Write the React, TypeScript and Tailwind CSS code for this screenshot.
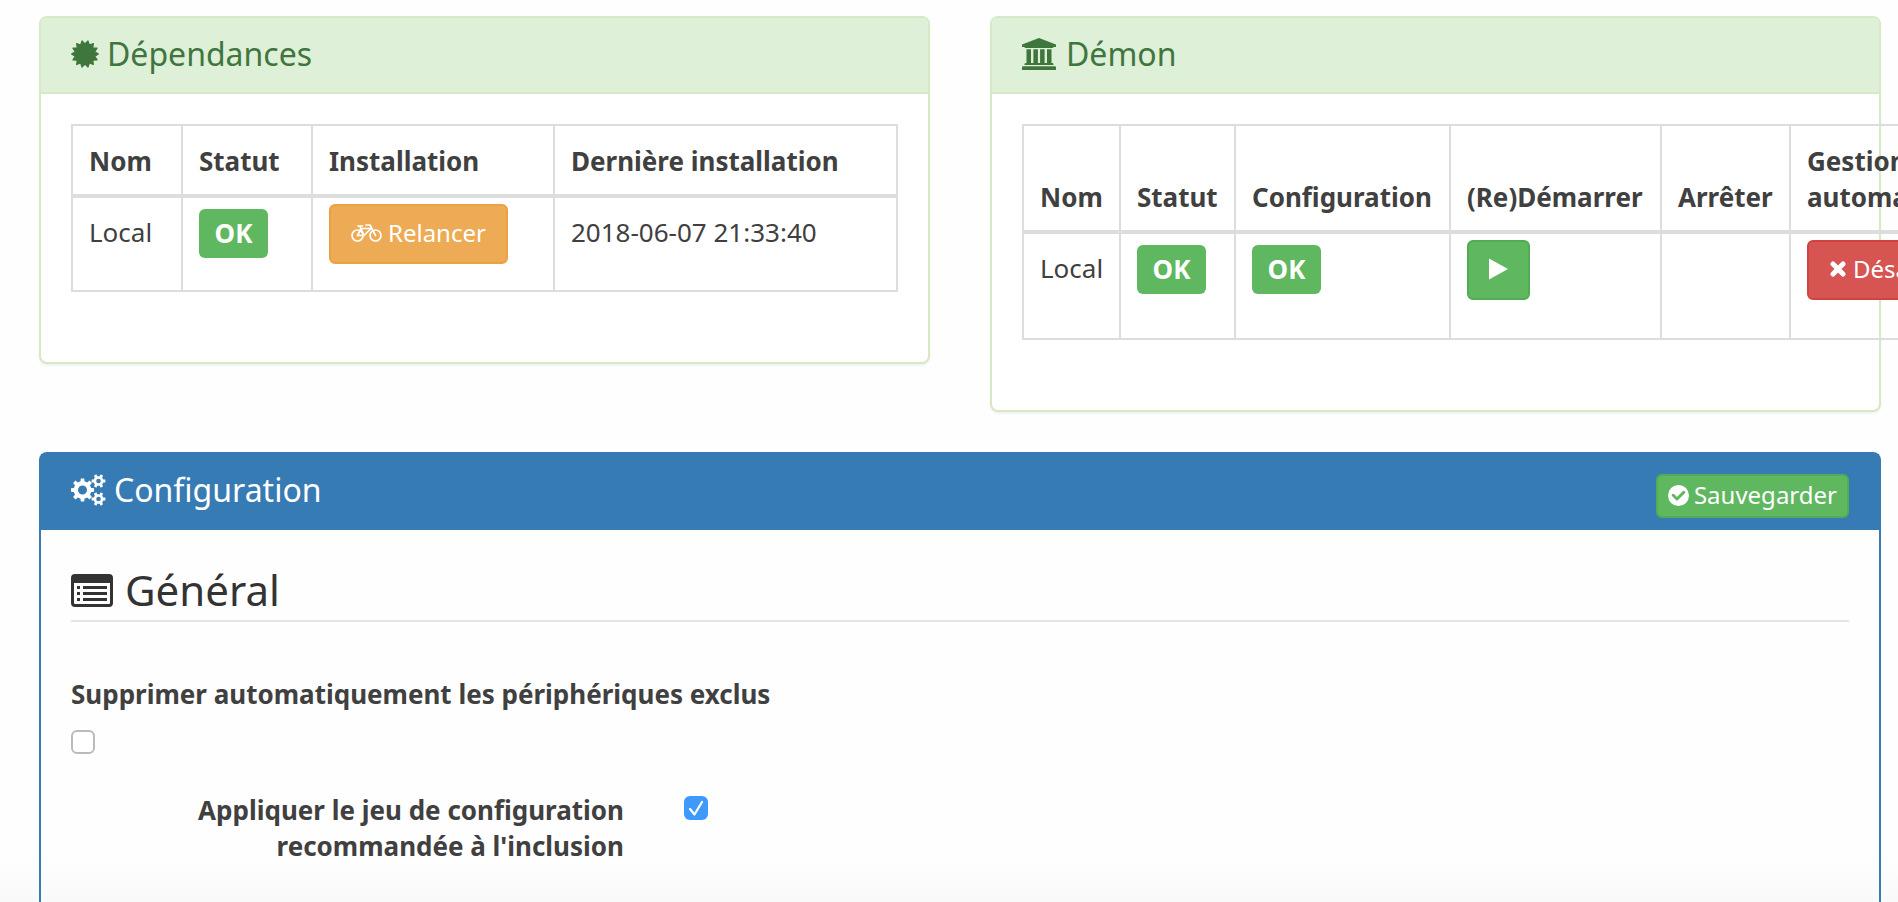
import type { ReactNode } from 'react';

/* Closed outline of a toothed wheel centred on (cx, cy). */
function gear(cx: number, cy: number, inner: number, outer: number, teeth: number, phase: number) {
  const step = (Math.PI * 2) / teeth;
  const points: string[] = [];
  for (let i = 0; i < teeth; i++) {
    const a = i * step + phase;
    const corners: [number, number][] = [
      [inner, -0.28],
      [outer, -0.19],
      [outer, 0.19],
      [inner, 0.28],
    ];
    for (const [r, f] of corners) {
      points.push(`${(cx + r * Math.cos(a + f * step)).toFixed(2)} ${(cy + r * Math.sin(a + f * step)).toFixed(2)}`);
    }
  }
  return `M${points.join('L')}Z`;
}

function hole(cx: number, cy: number, r: number) {
  return `M${cx - r} ${cy}a${r} ${r} 0 1 0 ${2 * r} 0a${r} ${r} 0 1 0 ${-2 * r} 0Z`;
}

function burst(c: number, inner: number, outer: number, n: number) {
  const points: string[] = [];
  for (let i = 0; i < n * 2; i++) {
    const r = i % 2 ? inner : outer;
    const a = ((i + 1) * Math.PI) / n - Math.PI / 2;
    points.push(`${(c + r * Math.cos(a)).toFixed(2)} ${(c + r * Math.sin(a)).toFixed(2)}`);
  }
  return `M${points.join('L')}Z`;
}

const CertificateIcon = () => (
  <svg className="size-7 shrink-0" viewBox="0 0 28 28" fill="currentColor" stroke="currentColor" strokeWidth="1.2" strokeLinejoin="round" aria-hidden="true">
    <path d={burst(14, 10, 13.4, 14)} />
  </svg>
);

const BankIcon = () => (
  <svg className="h-8 w-9 shrink-0" viewBox="0 0 36 32" fill="currentColor" aria-hidden="true">
    <path d="M17 0L34 6.6V9H31.6Q31.4 10 30.4 10H3.6Q2.6 10 2.4 9H0V6.6Z" />
    <path d="M4.5 11.3H9V25H11.4V11.3H15.9V25H18.1V11.3H22.6V25H25V11.3H29.5V25H30.4Q31.6 25 31.6 27H2.4Q2.4 25 3.6 25H4.5Z" />
    <path d="M1.2 28.3H32.8Q34 28.3 34 29.5V32H0V29.5Q0 28.3 1.2 28.3Z" />
  </svg>
);

const CogsIcon = () => (
  <svg className="h-8 w-[35px] shrink-0" viewBox="0 0 35 32" fill="currentColor" fillRule="evenodd" aria-hidden="true">
    <path d={gear(11.5, 16, 8.9, 11.7, 8, 0) + hole(11.5, 16, 4.5)} />
    <path d={gear(27.5, 7, 5, 7, 6, 0) + hole(27.5, 7, 2.3)} />
    <path d={gear(27.5, 25, 5, 7, 6, 0) + hole(27.5, 25, 2.3)} />
  </svg>
);

const ListIcon = () => (
  <svg className="h-[33px] w-[42px] shrink-0" viewBox="0 0 42 33" fill="currentColor" aria-hidden="true">
    <path fillRule="evenodd" d="M4 0H38Q42 0 42 4V29Q42 33 38 33H4Q0 33 0 29V4Q0 0 4 0ZM3 9V29Q3 30 4 30H38Q39 30 39 29V9Z" />
    <path d="M6 12h3v3H6zM6 18h3v3H6zM6 24h3v3H6zM12 12h24v3H12zM12 18h24v3H12zM12 24h24v3H12z" />
  </svg>
);

const BikeIcon = () => (
  <svg className="h-[18px] w-[31px] shrink-0" viewBox="0 0 31 18" fill="none" stroke="currentColor" strokeWidth="1.7" strokeLinejoin="round" strokeLinecap="round" aria-hidden="true">
    <circle cx="6.5" cy="11.5" r="5.5" />
    <circle cx="24.5" cy="11.5" r="5.5" />
    <path d="M6.5 11.5H13L20 4.5H10L6.5 11.5M13 11.5L8.7 2H7M8 2H11.5M24.5 11.5L19 1H15" />
  </svg>
);

const PlayIcon = () => (
  <svg className="h-[22px] w-[19px] shrink-0" viewBox="0 0 19 22" fill="currentColor" aria-hidden="true">
    <path d="M0 0.5L19 11L0 21.5Z" />
  </svg>
);

const TimesIcon = () => (
  <svg className="h-4 w-[18px] shrink-0" viewBox="0 0 18 16" fill="none" stroke="currentColor" strokeWidth="5" strokeLinecap="round" aria-hidden="true">
    <path d="M4 3L14 13M14 3L4 13" />
  </svg>
);

const CheckCircleIcon = () => (
  <svg className="size-[21px] shrink-0" viewBox="0 0 21 21" aria-hidden="true">
    <circle cx="10.5" cy="10.5" r="10.5" fill="currentColor" />
    <path d="M5.2 10.3L9 14L15.8 7.3" fill="none" stroke="#5fb760" strokeWidth="3" strokeLinecap="round" strokeLinejoin="round" />
  </svg>
);

function StatusPanel({ icon, title, children }: { icon: ReactNode; title: string; children: ReactNode }) {
  return (
    <section className="min-w-0 flex-1 rounded-lg border-2 border-[#d6e9c6] bg-white shadow-[0_2px_2px_rgba(0,0,0,0.05)]">
      <h3 className="flex h-[76px] items-center gap-2 rounded-t-md border-b-2 border-[#d6e9c6] bg-[#def0d8] px-[30px] pb-0.5 text-[32px] leading-9 text-[#3f763e]">
        {icon}
        {title}
      </h3>
      <div className="px-[30px] pt-[30px] pb-[70px]">{children}</div>
    </section>
  );
}

const Th = ({ children, className = '' }: { children: ReactNode; className?: string }) => (
  <th className={`border-2 border-b-4 border-[#ddd] px-4 pt-[17px] pb-[15px] text-left align-bottom font-bold ${className}`}>{children}</th>
);

const Td = ({ children, className = 'pt-4' }: { children?: ReactNode; className?: string }) => (
  <td className={`border-2 border-[#ddd] px-4 align-top ${className}`}>{children}</td>
);

const OkLabel = () => (
  <span className="flex h-[49px] w-[69px] items-center justify-center rounded-md bg-[#5fb760] pb-0.5 font-bold text-white">OK</span>
);

const buttonBase = 'flex h-[60px] items-center gap-1.5 rounded-md border-2 px-5 pb-0.5 text-2xl text-white';

export default function App() {
  return (
    <main className="flex min-h-screen flex-col gap-10 overflow-x-hidden bg-[#fefefe] bg-linear-to-b from-[#fefefe] from-95% to-[#f9f9f9] pt-4 pr-[17px] pl-[39px] font-['Noto_Sans','Open_Sans',sans-serif] text-[26px] leading-9 text-[#404040]">
      <div className="flex items-start gap-[60px]">
        <StatusPanel icon={<CertificateIcon />} title="Dépendances">
          <table className="w-full border-collapse">
            <thead>
              <tr>
                <Th className="w-[110px]">Nom</Th>
                <Th className="w-[130px]">Statut</Th>
                <Th className="w-[242px]">Installation</Th>
                <Th>Dernière installation</Th>
              </tr>
            </thead>
            <tbody>
              <tr className="h-[95px]">
                <Td>Local</Td>
                <Td className="pt-[11px]"><OkLabel /></Td>
                <Td className="pt-1.5">
                  <button type="button" className={`${buttonBase} border-[#eba041] bg-[#eeab56]`}>
                    <BikeIcon />
                    Relancer
                  </button>
                </Td>
                <Td>2018-06-07 21:33:40</Td>
              </tr>
            </tbody>
          </table>
        </StatusPanel>
        <StatusPanel icon={<BankIcon />} title="Démon">
          <table className="w-[1020px] table-fixed border-collapse">
            <thead>
              <tr>
                <Th className="w-[97px]">Nom</Th>
                <Th className="w-[115px]">Statut</Th>
                <Th className="w-[215px]">Configuration</Th>
                <Th className="w-[211px]">(Re)Démarrer</Th>
                <Th className="w-[129px]">Arrêter</Th>
                <Th>Gestion automatique</Th>
              </tr>
            </thead>
            <tbody>
              <tr className="h-[107px]">
                <Td>Local</Td>
                <Td className="pt-[11px]"><OkLabel /></Td>
                <Td className="pt-[11px]"><OkLabel /></Td>
                <Td className="pt-1.5">
                  <button type="button" aria-label="(Re)Démarrer" className={`${buttonBase} border-[#50ad51] bg-[#5fb760]`}>
                    <PlayIcon />
                  </button>
                </Td>
                <Td />
                <Td className="pt-1.5">
                  <button type="button" className={`${buttonBase} border-[#d04340] bg-[#d65452]`}>
                    <TimesIcon />
                    Désactiver
                  </button>
                </Td>
              </tr>
            </tbody>
          </table>
        </StatusPanel>
      </div>

      <section className="flex-1 rounded-t-lg border-2 border-b-0 border-[#377bb5]">
        <div className="flex h-[76px] items-start justify-between bg-[#377bb5] px-[30px] pt-[18px] text-white">
          <h3 className="flex items-center gap-2 text-[32px] leading-9">
            <CogsIcon />
            Configuration
          </h3>
          <button type="button" className="mt-0.5 flex h-11 items-center gap-[5px] rounded-md border-2 border-[#50ad51] bg-[#5fb760] px-2.5 pb-0.5 text-2xl">
            <CheckCircleIcon />
            Sauvegarder
          </button>
        </div>
        <form className="px-[30px] pt-[30px]">
          <fieldset>
            <legend className="mb-[54px] flex w-full items-center gap-3 border-b-2 border-[#e5e5e5] text-[42px] leading-[60px] text-[#333]">
              <ListIcon />
              Général
            </legend>
            <label htmlFor="remove-excluded" className="block font-bold">
              Supprimer automatiquement les périphériques exclus
            </label>
            <input
              id="remove-excluded"
              type="checkbox"
              className="mt-[18px] block size-6 appearance-none rounded-md border-2 border-[#bbb] bg-white"
            />
            <div className="mt-[38px] flex gap-[60px]">
              <label htmlFor="apply-recommended" className="w-[553px] pl-[100px] text-right font-bold">
                Appliquer le jeu de configuration recommandée à l'inclusion
              </label>
              <span className="mt-1 grid size-6 [&>*]:col-start-1 [&>*]:row-start-1">
                <input id="apply-recommended" type="checkbox" defaultChecked className="size-6 appearance-none rounded-md bg-[#3f99fb]" />
                <svg className="pointer-events-none size-6" viewBox="0 0 24 24" fill="none" stroke="#fff" strokeWidth="2.2" strokeLinecap="round" strokeLinejoin="round" aria-hidden="true">
                  <path d="M6 13L10.5 18.5L18 6" />
                </svg>
              </span>
            </div>
          </fieldset>
        </form>
      </section>
    </main>
  );
}
